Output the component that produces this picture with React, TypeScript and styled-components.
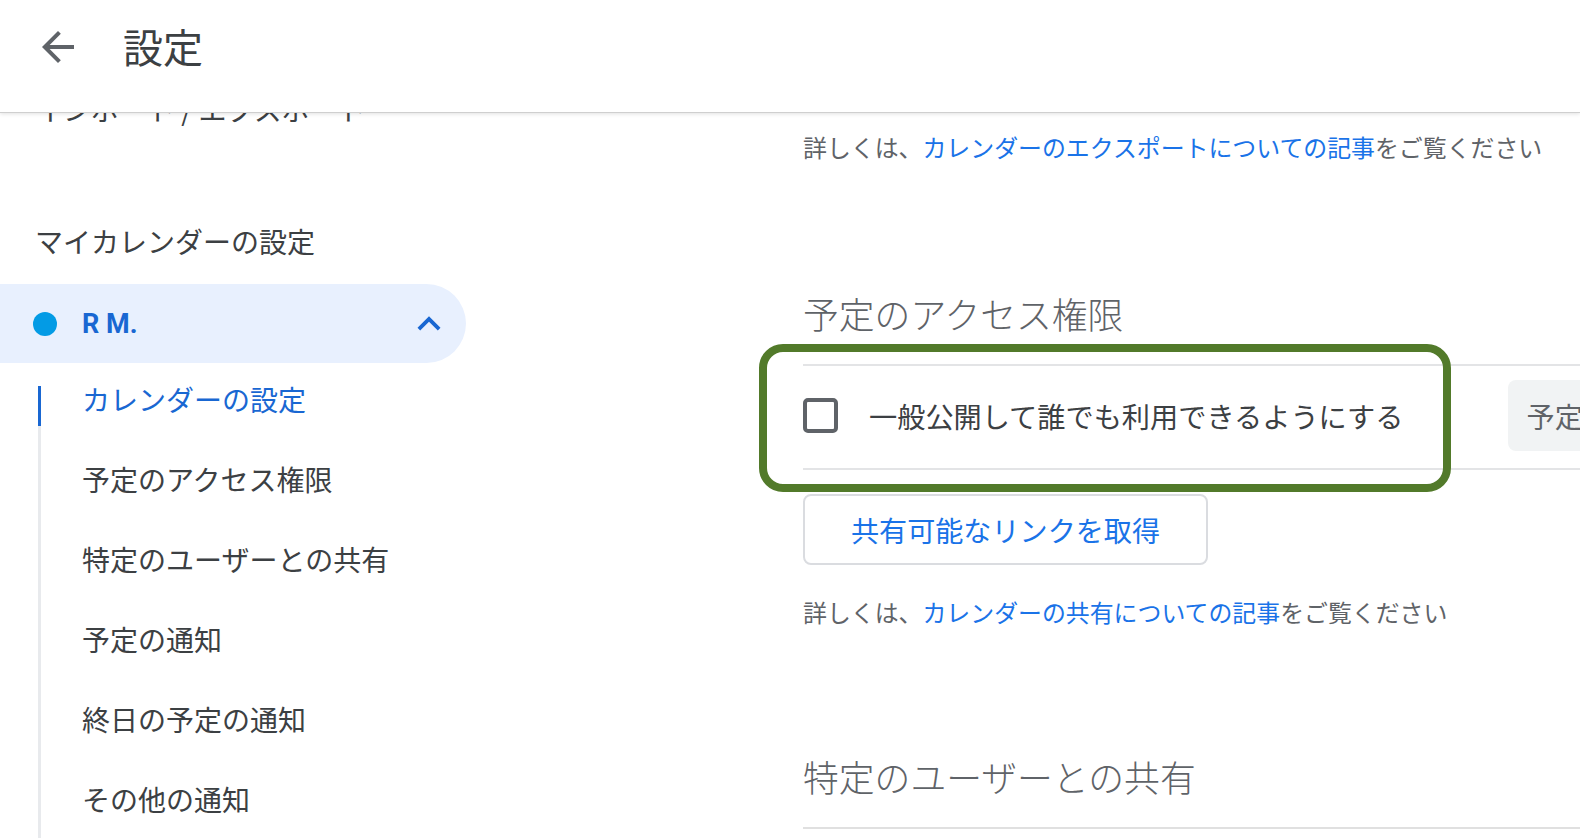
import styled, { createGlobalStyle } from 'styled-components';

const GlobalStyles = createGlobalStyle`
  html, body {
    margin: 0;
    padding: 0;
    background: #ffffff;
    overflow: hidden;
  }
  body {
    font-family: "Noto Sans CJK JP", "Noto Sans", sans-serif;
    color: #3c4043;
  }
`;

const subItems = [
  'カレンダーの設定',
  '予定のアクセス権限',
  '特定のユーザーとの共有',
  '予定の通知',
  '終日の予定の通知',
  'その他の通知',
  'カレンダーの統合',
];

function App() {
  return (
    <Page>
      <GlobalStyles />
      <TopBar>
        <BackButton aria-label="戻る">
          <svg width="48" height="48" viewBox="0 0 24 24">
            <path fill="#5f6368" d="M20 11H7.83l5.59-5.59L12 4l-8 8 8 8 1.41-1.41L7.83 13H20v-2z" />
          </svg>
        </BackButton>
        <Title>設定</Title>
      </TopBar>

      <Body>
        <Sidebar>
          <NavLabel>インポート / エクスポート</NavLabel>
          <NavHeading>マイカレンダーの設定</NavHeading>
          <CalendarPill>
            <Dot />
            <CalendarName>R M.</CalendarName>
            <Chevron width="46" height="46" viewBox="0 0 24 24">
              <path fill="#1967d2" d="M7.41 15.41L12 10.83l4.59 4.58L18 14l-6-6-6 6z" />
            </Chevron>
          </CalendarPill>
          <SubList>
            {subItems.map((item, i) => (
              <SubItem key={item} $active={i === 0}>{item}</SubItem>
            ))}
          </SubList>
        </Sidebar>

        <Main>
          <Content>
            <Info $top={16}>
              詳しくは、<Link>カレンダーのエクスポートについての記事</Link>をご覧ください
            </Info>

            <SectionTitle $top={123}>予定のアクセス権限</SectionTitle>
            <CheckRow>
              <Highlight />
              <Checkbox />
              <CheckLabel>一般公開して誰でも利用できるようにする</CheckLabel>
              <GreyButton>予定の詳細をすべて表示</GreyButton>
            </CheckRow>
            <OutlineButton>共有可能なリンクを取得</OutlineButton>
            <Info $top={29}>
              詳しくは、<Link>カレンダーの共有についての記事</Link>をご覧ください
            </Info>

            <SectionTitle $top={121}>特定のユーザーとの共有</SectionTitle>
            <Divider />
          </Content>
        </Main>
      </Body>
    </Page>
  );
}

const Page = styled.div`
  height: 838px;
  width: 100%;
  display: flex;
  flex-direction: column;
  overflow: hidden;
`;

const TopBar = styled.header`
  position: relative;
  z-index: 2;
  height: 112px;
  flex-shrink: 0;
  display: flex;
  align-items: center;
  background: #ffffff;
  border-bottom: 1px solid #cfcfcf;
  box-shadow: 0 1px 4px rgba(0, 0, 0, 0.12);
`;

const BackButton = styled.div`
  display: flex;
  margin-left: 34px;
  margin-top: -18px;
  width: 48px;
  height: 48px;
`;

const Title = styled.h1`
  margin: -20px 0 0 41px;
  font-size: 40px;
  font-weight: 400;
  color: #3c4043;
  line-height: 1;
`;

const Body = styled.div`
  flex: 1;
  min-height: 0;
  display: flex;
  align-items: flex-start;
  overflow: hidden;
`;

const Sidebar = styled.nav`
  width: 466px;
  flex-shrink: 0;
  display: flex;
  flex-direction: column;
  margin-top: -44px;

  & > * {
    flex-shrink: 0;
  }
`;

const NavLabel = styled.div`
  height: 80px;
  display: flex;
  align-items: center;
  padding-left: 35px;
  font-size: 28px;
  color: #3c4043;
  white-space: nowrap;
`;

const NavHeading = styled(NavLabel)`
  margin-top: 52px;
`;

const CalendarPill = styled.div`
  margin-top: 3px;
  height: 79px;
  display: flex;
  align-items: center;
  background: #e8f0fe;
  border-radius: 0 40px 40px 0;
`;

const Dot = styled.span`
  width: 24px;
  height: 24px;
  border-radius: 50%;
  background: #039be5;
  margin-left: 33px;
  flex-shrink: 0;
`;

const CalendarName = styled.span`
  margin-left: 25px;
  font-family: Roboto, "Noto Sans", sans-serif;
  font-weight: 700;
  font-size: 27px;
  color: #1967d2;
  flex: 1;
`;

const Chevron = styled.svg`
  margin-right: 14px;
`;

const SubList = styled.div`
  position: relative;
  margin-left: 38px;
  margin-top: -4px;
  display: flex;
  flex-direction: column;

  &::before {
    content: '';
    position: absolute;
    left: 0;
    top: 27px;
    bottom: 0;
    width: 3px;
    background: #e8eaed;
  }
`;

const SubItem = styled.div<{ $active?: boolean }>`
  position: relative;
  height: 80px;
  flex-shrink: 0;
  display: flex;
  align-items: center;
  padding-left: 44px;
  font-size: 28px;
  white-space: nowrap;
  color: ${p => (p.$active ? '#1967d2' : '#3c4043')};

  &::before {
    content: '';
    display: ${p => (p.$active ? 'block' : 'none')};
    position: absolute;
    left: 0;
    top: 27px;
    width: 3px;
    height: 40px;
    background: #1967d2;
    z-index: 1;
  }
`;

const Main = styled.main`
  flex: 1;
  min-width: 0;
  padding-left: 337px;
`;

const Content = styled.div`
  width: 1000px;
  display: flex;
  flex-direction: column;

  & > * {
    flex-shrink: 0;
  }
`;

const Info = styled.p<{ $top: number }>`
  margin: ${p => p.$top}px 0 0;
  height: 36px;
  line-height: 36px;
  font-size: 23.9px;
  color: #5f6368;
  white-space: nowrap;
`;

const Link = styled.span`
  color: #1a73e8;
`;

const SectionTitle = styled.h2<{ $top: number }>`
  margin: ${p => p.$top}px 0 0;
  height: 50px;
  line-height: 50px;
  font-size: 35.8px;
  font-weight: 300;
  color: #5f6368;
  white-space: nowrap;
`;

const CheckRow = styled.div`
  position: relative;
  margin-top: 26px;
  height: 98px;
  padding-bottom: 4px;
  display: flex;
  align-items: center;
  gap: 31px;
  border-top: 2px solid #e3e4e6;
  border-bottom: 2px solid #e3e4e6;
`;

const Highlight = styled.div`
  position: absolute;
  left: -44px;
  top: -22px;
  width: 692px;
  height: 148px;
  box-sizing: border-box;
  border: 8px solid #527a2a;
  border-radius: 24px;
  pointer-events: none;
`;

const Checkbox = styled.span`
  width: 35px;
  height: 35px;
  box-sizing: border-box;
  border: 4px solid #5f6368;
  border-radius: 5px;
  flex-shrink: 0;
`;

const CheckLabel = styled.span`
  font-size: 28.2px;
  color: #3c4043;
  white-space: nowrap;
`;

const GreyButton = styled.div`
  margin-left: 74px;
  height: 71px;
  display: flex;
  align-items: center;
  padding: 0 18px;
  background: #f1f3f4;
  border-radius: 8px;
  font-size: 28.2px;
  color: #5f6368;
  white-space: nowrap;
  flex-shrink: 0;
`;

const OutlineButton = styled.div`
  margin-top: 24px;
  width: 405px;
  height: 71px;
  box-sizing: border-box;
  display: flex;
  align-items: center;
  justify-content: center;
  border: 2px solid #dadce0;
  border-radius: 8px;
  font-size: 28.1px;
  color: #1a73e8;
  white-space: nowrap;
`;

const Divider = styled.div`
  margin-top: 26px;
  height: 2px;
  background: #e0e0e0;
`;

export default App;
